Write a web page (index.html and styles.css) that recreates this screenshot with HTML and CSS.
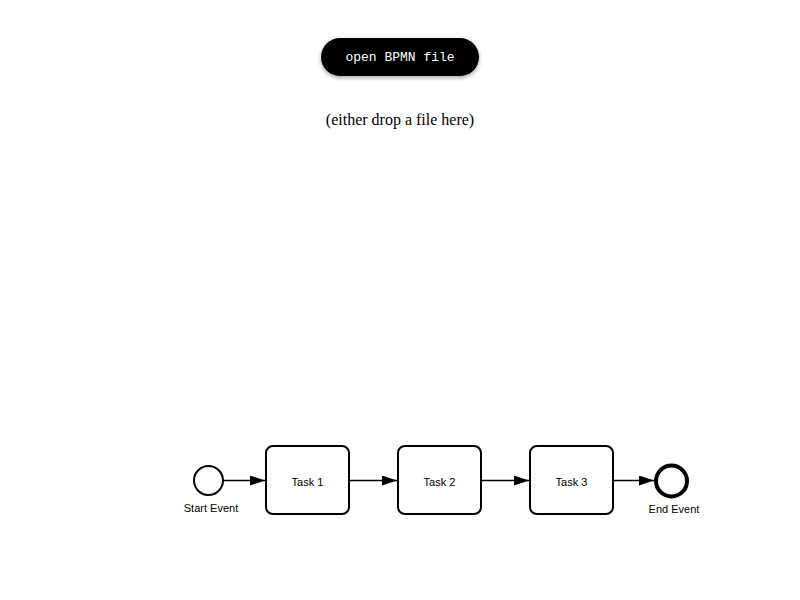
FILE: index.html
```html
<!DOCTYPE html>
<html lang="en">
<head>
    <meta charset="UTF-8">
    <meta name="viewport" content="width=device-width, initial-scale=1.0">
    <title>BPMN Viewer</title>
    <link rel="stylesheet" href="styles.css">
</head>
<body>

    <div class="intro">
        <button class="open-btn">open BPMN file</button>
        <p class="hint">(either drop a file here)</p>
    </div>

    <!-- Diagram canvas, viewBox uses page coordinates -->
    <svg class="canvas" viewBox="0 129 800 471" width="800" height="471">
        <defs>
            <marker id="arrow" viewBox="0 0 15 10" refX="15" refY="5" markerWidth="15" markerHeight="10" markerUnits="userSpaceOnUse" orient="auto">
                <path d="M0 0 L15 5 L0 10 Z" fill="#000"></path>
            </marker>
        </defs>

        <g class="flows">
            <line x1="224" y1="480.5" x2="265" y2="480.5" marker-end="url(#arrow)"></line>
            <line x1="349" y1="480.5" x2="397" y2="480.5" marker-end="url(#arrow)"></line>
            <line x1="481" y1="480.5" x2="529" y2="480.5" marker-end="url(#arrow)"></line>
            <line x1="613" y1="480.5" x2="654" y2="480.5" marker-end="url(#arrow)"></line>
        </g>

        <circle class="start-event" cx="208.5" cy="480.5" r="14.5"></circle>
        <text class="label" x="211" y="512">Start Event</text>

        <rect class="task" x="266" y="446" width="83" height="68" rx="7"></rect>
        <text class="label" x="307.5" y="486">Task 1</text>

        <rect class="task" x="398" y="446" width="83" height="68" rx="7"></rect>
        <text class="label" x="439.5" y="486">Task 2</text>

        <rect class="task" x="530" y="446" width="83" height="68" rx="7"></rect>
        <text class="label" x="571.5" y="486">Task 3</text>

        <circle class="end-event" cx="671.5" cy="481" r="15.5"></circle>
        <text class="label" x="674" y="513">End Event</text>
    </svg>

</body>
</html>
```

FILE: styles.css
```css
body {
    margin: 0;
    font-family: "Liberation Serif", serif;
    background: #fff;
}

.intro {
    display: flex;
    flex-direction: column;
    align-items: center;
}

.open-btn {
    margin-top: 38px;
    height: 38px;
    padding: 0 24px;
    border: none;
    border-radius: 19px;
    background: #000;
    color: #fff;
    font-family: "Liberation Mono", monospace;
    font-size: 13px;
    box-shadow: 0 2px 4px rgba(0, 0, 0, 0.35);
    cursor: pointer;
}

.hint {
    margin: 35px 0 0;
    font-size: 16px;
    line-height: 18px;
    color: #000;
}

.canvas {
    display: block;
}

.flows line {
    stroke: #000;
    stroke-width: 1.7;
}

.start-event {
    fill: #fff;
    stroke: #000;
    stroke-width: 2;
}

.end-event {
    fill: #fff;
    stroke: #000;
    stroke-width: 4;
}

.task {
    fill: #fff;
    stroke: #000;
    stroke-width: 2;
}

.label {
    font-family: "Liberation Sans", Arial, sans-serif;
    font-size: 11px;
    text-anchor: middle;
    fill: #000;
}
```
